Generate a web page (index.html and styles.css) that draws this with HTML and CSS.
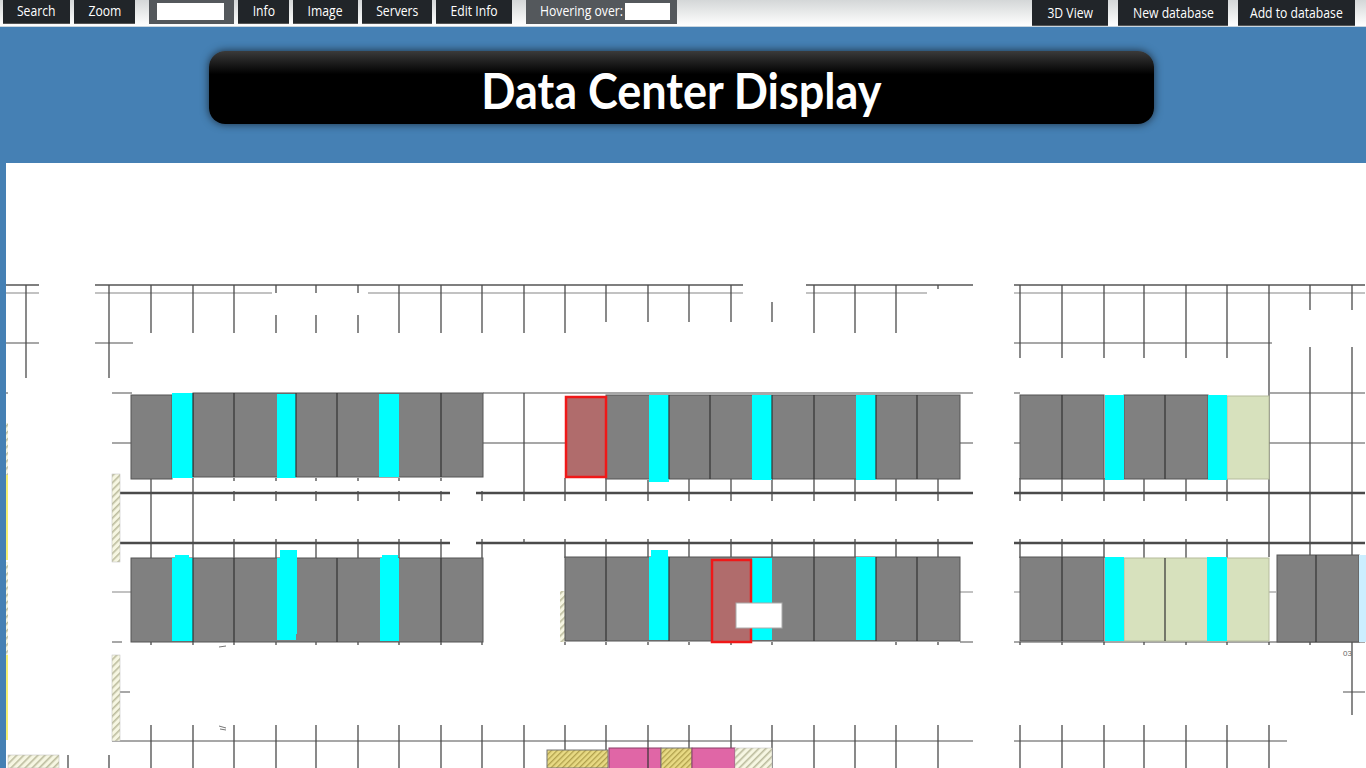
FILE: index.html
```html
<!DOCTYPE html>
<html lang="en">

<head>
    <meta charset="UTF-8">
    <meta name="viewport" content="width=device-width, initial-scale=1.0">
    <title>Data Center Display</title>
    <link rel="stylesheet" href="styles.css">
</head>

<body>
    <div class="toolbar">
        <button class="tool w-search"><span>Search</span></button>
        <button class="tool w-zoom"><span>Zoom</span></button>
        <div class="tool-field w-find"><input class="field-input find-input" type="text"></div>
        <button class="tool w-info"><span>Info</span></button>
        <button class="tool w-image"><span>Image</span></button>
        <button class="tool w-servers"><span>Servers</span></button>
        <button class="tool w-edit"><span>Edit Info</span></button>
        <div class="tool-field w-hover"><span class="hover-label">Hovering over:</span><input class="field-input hover-input" type="text"></div>
        <div class="toolbar-right">
            <button class="tool tall w-3d"><span>3D View</span></button>
            <button class="tool tall w-new"><span>New database</span></button>
            <button class="tool tall w-add"><span>Add to database</span></button>
        </div>
    </div>

    <div class="banner">
        <h1 class="banner-title"><span>Data Center Display</span></h1>
    </div>

    <div class="floor">
        <svg class="floor-plan" viewBox="6 163 1360 605" width="1360" height="605">
            <defs>
                <pattern id="hatch-pale" width="5" height="5" patternUnits="userSpaceOnUse" patternTransform="rotate(45)">
                    <rect width="5" height="5" fill="#f6f6e2"/>
                    <rect width="1.6" height="5" fill="#bcbc9e"/>
                </pattern>
                <pattern id="hatch-gold" width="4" height="4" patternUnits="userSpaceOnUse" patternTransform="rotate(45)">
                    <rect width="4" height="4" fill="#e8da84"/>
                    <rect width="1.3" height="4" fill="#b0a04c"/>
                </pattern>
            </defs>

            <!-- thin horizontals -->
            <path class="line-h" d="M6 343H39M95 343H133M1014 343H1272
                M6 393H8M112 393H132M483 393H973M1014 393H1020M1270 393H1365
                M112 443H131M483 443H565M960 443H973M1014 443H1020M1269 443H1365
                M112 642H122M483 642H483M960 642H973M1014 642H1365
                M120 692H130M1343 692H1365
                M112 741H973M1014 741H1287"/>
            <!-- pale double lines -->
            <path class="line-pale" d="M6 293H39M95 293H272M368 293H743M806 293H927M1014 293H1365
                M112 592H131M960 592H973M1014 592H1020M1269 592H1276"/>
            <!-- heavy horizontals -->
            <path class="line-top" d="M6 285H39M95 285H743M806 285H973M1014 285H1365"/>
            <path class="line-heavy" d="M120 493H450M476 493H973M1014 493H1365
                M120 543H450M476 543H973M1014 543H1365"/>

            <!-- column lines -->
            <path class="line-v" d="M26 285V378M109 285V378
                M151 285V333M151 478V558M151 642V645M151 725V768
                M193 285V333M193 478V558M193 642V645M193 725V768
                M234 285V333M234 478V481M234 491V501M234 539V558M234 642V645M234 725V768
                M276 285V293M276 315V333M276 478V481M276 491V501M276 539V558M276 642V645M276 725V768
                M316 285V293M316 315V333M316 478V481M316 491V501M316 539V558M316 642V645M316 725V768
                M358 285V293M358 315V333M358 478V481M358 491V501M358 539V558M358 642V645M358 725V768
                M399 285V333M399 478V481M399 491V501M399 539V558M399 642V645M399 725V768
                M441 285V333M441 478V481M441 491V501M441 539V558M441 642V645M441 725V768
                M482 285V333M482 491V501M482 539V558M482 642V645M482 725V768
                M524 285V333M524 393V501M524 539V543M524 725V768
                M565 285V333M565 478V501M565 539V558M565 642V645M565 725V768
                M606 285V322M606 478V501M606 539V558M606 642V645M606 725V768
                M648 285V322M648 480V501M648 539V558M648 642V645M648 725V768
                M689 285V322M689 478V501M689 539V558M689 642V645M689 725V768
                M731 285V322M731 478V501M731 539V558M731 642V645M731 725V768
                M772 302V322M772 478V501M772 539V558M772 642V645M772 725V768
                M814 285V333M814 478V501M814 539V558M814 725V768
                M855 285V333M855 478V501M855 539V558M855 725V768
                M896 285V333M896 478V501M896 539V558M896 642V645M896 725V768
                M938 285V289M938 478V501M938 539V558M938 642V645M938 725V768
                M1020 285V358M1020 478V501M1020 539V558M1020 642V645M1020 725V768
                M1062 285V358M1062 478V501M1062 539V558M1062 642V645M1062 725V768
                M1104 285V358M1104 478V501M1104 539V558M1104 642V645M1104 725V768
                M1144 285V358M1144 478V501M1144 539V558M1144 642V645M1144 725V768
                M1186 285V358M1186 478V501M1186 539V558M1186 642V645M1186 725V768
                M1227 285V358M1227 478V501M1227 539V558M1227 642V645M1227 725V768
                M1269 285V557M1269 642V645M1269 725V768
                M1310 285V310M1310 347V555M1310 642V645
                M1352 285V310M1352 347V555M1352 642V715
                M68 755V768M109 755V768"/>

            <!-- hatched walls -->
            <rect class="hatch" x="112" y="474" width="8" height="88"/>
            <rect class="hatch" x="112" y="655" width="8" height="86"/>
            <rect class="hatch-soft" x="560" y="591" width="5" height="51"/>
            <rect class="hatch-soft" x="6" y="423" width="2" height="52"/>
            <rect class="hatch-soft" x="6" y="562" width="2" height="93"/>
            <rect class="hatch" x="8" y="755" width="51" height="13"/>
            <rect class="edge-yellow" x="6" y="475" width="2" height="85"/>
            <rect class="edge-yellow" x="6" y="655" width="2" height="85"/>

            <!-- row 1 -->
            <rect class="rack" x="131" y="395" width="41" height="84"/>
            <rect class="rack" x="193" y="393" width="290" height="84"/>
            <rect class="cool" x="172" y="393" width="21" height="85"/>
            <rect class="cool" x="277" y="394" width="19" height="84"/>
            <rect class="cool" x="379" y="394" width="20" height="83"/>
            <path class="divider" d="M234 393V477M337 393V477M441 393V477M193 393V477M296 393V477"/>

            <rect class="rack" x="606" y="395" width="354" height="84"/>
            <rect class="rack-flag" x="566" y="397" width="40" height="80"/>
            <rect class="cool" x="649" y="395" width="20" height="87"/>
            <rect class="cool" x="752" y="395" width="20" height="85"/>
            <rect class="cool" x="856" y="395" width="20" height="85"/>
            <path class="divider" d="M669 395V479M710 395V479M772 395V479M814 395V479M876 395V479M917 395V479"/>

            <rect class="rack" x="1020" y="395" width="84" height="84"/>
            <rect class="rack" x="1124" y="395" width="84" height="84"/>
            <rect class="spare" x="1227" y="396" width="42" height="83"/>
            <rect class="cool" x="1105" y="395" width="19" height="85"/>
            <rect class="cool" x="1208" y="395" width="19" height="85"/>
            <path class="divider" d="M1062 395V479M1165 395V479"/>

            <!-- row 2 -->
            <rect class="rack" x="131" y="558" width="352" height="84"/>
            <rect class="cool" x="172" y="558" width="21" height="83"/>
            <rect class="cool" x="175" y="555" width="14" height="4"/>
            <rect class="cool" x="277" y="558" width="19" height="82"/>
            <rect class="cool" x="280" y="550" width="17" height="84"/>
            <rect class="cool" x="380" y="558" width="19" height="83"/>
            <rect class="cool" x="382" y="555" width="16" height="4"/>
            <path class="divider" d="M234 558V642M337 558V642M441 558V642M193 558V642"/>

            <rect class="rack" x="565" y="557" width="395" height="84"/>
            <rect class="cool" x="649" y="557" width="20" height="83"/>
            <rect class="cool" x="651" y="550" width="17" height="8"/>
            <rect class="cool" x="752" y="558" width="20" height="82"/>
            <rect class="cool" x="856" y="557" width="20" height="83"/>
            <path class="divider" d="M606 557V641M669 557V641M814 557V641M876 557V641M917 557V641"/>
            <rect class="rack-flag" x="712" y="560" width="39" height="82"/>
            <rect class="note" x="736" y="603" width="46" height="25"/>

            <rect class="rack" x="1020" y="557" width="84" height="84"/>
            <rect class="spare" x="1124" y="558" width="145" height="83"/>
            <rect class="cool" x="1105" y="557" width="19" height="84"/>
            <rect class="cool" x="1207" y="557" width="20" height="84"/>
            <path class="divider" d="M1062 557V641M1165 558V641"/>

            <rect class="rack" x="1277" y="555" width="82" height="87"/>
            <path class="divider" d="M1316 555V642"/>
            <rect class="chilled" x="1359" y="555" width="7" height="87"/>
            <text class="tiny" x="1343" y="656">03</text>

            <!-- bottom row -->
            <rect class="hatch-gold" x="547" y="750" width="61" height="18"/>
            <rect class="pink" x="609" y="748" width="52" height="21"/>
            <rect class="hatch-gold" x="661" y="748" width="31" height="21"/>
            <rect class="pink" x="692" y="748" width="43" height="21"/>
            <rect class="hatch" x="735" y="748" width="37" height="21"/>
            <path class="divider" d="M648 748V768"/>

            <!-- stray marks left on the scan -->
            <path class="smudge" d="M219 726l7 2M220 729l6 1M219 647l7-1"/>
        </svg>
    </div>
</body>
</html>
```

FILE: styles.css
```css
html, body {
    margin: 0;
    padding: 0;
    height: 768px;
    overflow: hidden;
}

body {
    font-family: "Open Sans", Arial, sans-serif;
    background-color: #4580b4;
}

.toolbar {
    display: flex;
    align-items: flex-start;
    height: 26px;
    padding-left: 3px;
    gap: 4px;
    background: linear-gradient(#d4d7d8, #ffffff);
    border-bottom: 1px solid #c9d6e0;
}

.tool {
    height: 24px;
    padding: 0 0 2px;
    border: none;
    border-bottom: 1px solid #555;
    background-color: #212529;
    color: #fff;
    font-family: "Open Sans", Arial, sans-serif;
    font-size: 14px;
    white-space: nowrap;
    cursor: pointer;
}

.tool span {
    display: inline-block;
    transform: scaleX(0.87);
}

.tool.tall {
    height: 26px;
    padding-bottom: 0;
}

.tool-field {
    display: flex;
    align-items: flex-start;
    box-sizing: border-box;
    height: 24px;
    padding-top: 3px;
    background-color: #54585c;
    color: #fff;
    font-size: 14px;
}

.hover-label {
    flex: none;
    width: 85px;
    line-height: 16px;
    white-space: nowrap;
    transform: scaleX(0.87);
    transform-origin: left;
}

.field-input {
    box-sizing: border-box;
    height: 17px;
    padding: 0;
    border: none;
    background-color: #fff;
}

.w-search { width: 67px; }
.w-zoom { width: 61px; }
.w-find { width: 85px; margin-left: 10px; padding-left: 8px; }
.find-input { width: 67px; }
.w-info { width: 51px; }
.w-image { width: 65px; }
.w-servers { width: 70px; }
.w-edit { width: 76px; }
.w-hover { width: 151px; margin-left: 10px; padding-left: 14px; }
.hover-input { width: 45px; flex: none; }

.toolbar-right {
    display: flex;
    gap: 10px;
    margin-left: auto;
    margin-right: 11px;
}

.w-3d { width: 76px; }
.w-new { width: 110px; }
.w-add { width: 117px; }

.banner {
    height: 136px;
    padding-top: 24px;
    box-sizing: border-box;
}

.banner-title {
    box-sizing: border-box;
    width: 945px;
    height: 73px;
    margin: 0 0 0 209px;
    border-radius: 16px;
    background: linear-gradient(#3a3a3a, #000 32%);
    box-shadow: 0 0 8px #1c2c3c;
    color: #fff;
    font-family: Lato, "Open Sans", sans-serif;
    font-size: 50px;
    font-weight: 700;
    line-height: 78px;
    text-align: center;
}

.banner-title span {
    display: inline-block;
    transform: scaleX(0.9);
}

.floor {
    height: 605px;
    margin-left: 6px;
    background-color: #fff;
}

.floor-plan {
    display: block;
}

.line-h, .line-v, .line-pale, .line-top, .line-heavy, .divider, .smudge {
    fill: none;
}

.line-h { stroke: #8a8a8a; stroke-width: 1.5; }
.line-v { stroke: #4c4c4c; stroke-width: 1.3; }
.line-pale { stroke: #c2c2c2; stroke-width: 2; }
.line-top { stroke: #555; stroke-width: 1.5; }
.line-heavy { stroke: #4a4a4a; stroke-width: 2.5; }
.divider { stroke: #333; stroke-width: 1.2; }
.smudge { stroke: #777; stroke-width: 1; }

.rack { fill: #808080; stroke: #555; stroke-width: 1; }
.rack-flag { fill: #b06c6c; stroke: #f01818; stroke-width: 2.5; }
.cool { fill: #00ffff; }
.spare { fill: #d7e1bd; stroke: #b5bb9c; stroke-width: 1; }
.chilled { fill: #cceeff; }
.note { fill: #fff; stroke: #aaa; stroke-width: 1; }
.pink { fill: #e066a6; stroke: #8a3f68; stroke-width: 1; }

.hatch { fill: url(#hatch-pale); stroke: #bbb; stroke-width: 0.5; }
.hatch-soft { fill: url(#hatch-pale); }
.hatch-gold { fill: url(#hatch-gold); stroke: #777; stroke-width: 1; }
.edge-yellow { fill: #f4ee70; }

.tiny {
    fill: #666;
    font-family: "Liberation Sans", Arial, sans-serif;
    font-size: 8px;
}
```
